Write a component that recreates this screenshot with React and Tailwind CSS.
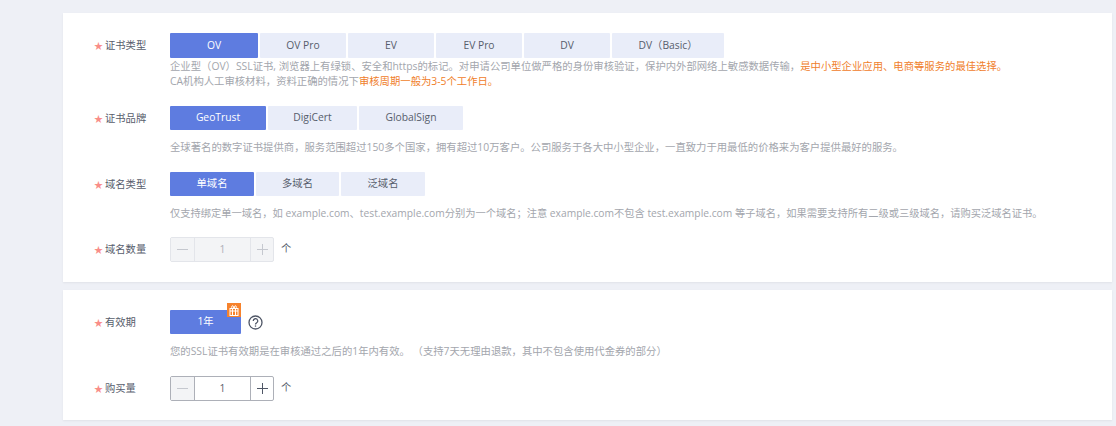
const FONT = "font-['Open_Sans','Noto_Sans_CJK_SC',sans-serif]";

function Label({ children }) {
  return (
    <div className="w-[76px] h-[25px] shrink-0 flex items-center pt-[1px] text-[10.3px] text-[#575d6c]">
      <span className="text-[#f98d88] w-[11px] text-[9px]">★</span>
      {children}
    </div>
  );
}

function Options({ items, widths, small }) {
  return (
    <div className="flex gap-[2px]">
      {items.map((item, i) => (
        <button
          key={item}
          type="button"
          className={`text-[10.3px] rounded-[1px] ${small ? 'h-[24px]' : 'h-[25px]'} ${widths[i]} ${
            i === 0 ? 'bg-[#5e7ce0] text-white' : 'bg-[#e9edf9] text-[#575d6c]'
          }`}
        >
          {item}
        </button>
      ))}
    </div>
  );
}

function Stepper({ disabled }) {
  return (
    <div className="flex items-center">
      <div
        className={`flex w-[104px] h-[25px] rounded-[2px] border text-[10.3px] ${
          disabled ? 'border-[#e3e5ea] bg-[#f3f4f6] text-[#adb0b8]' : 'border-[#adb0b8] bg-white text-[#575d6c]'
        }`}
      >
        <span className={`w-[24px] flex items-center justify-center border-r bg-[#f3f4f6] text-[#c5c8cf] ${disabled ? 'border-[#e3e5ea]' : 'border-[#adb0b8]'}`}>
          <svg width="11" height="11" viewBox="0 0 11 11"><path d="M0 5.5h11" stroke="currentColor" /></svg>
        </span>
        <span className="flex-1 flex items-center justify-center">1</span>
        <span className={`w-[23px] flex items-center justify-center border-l ${disabled ? 'border-[#e3e5ea] text-[#c5c8cf]' : 'border-[#adb0b8] text-[#4f5666]'}`}>
          <svg width="11" height="11" viewBox="0 0 11 11"><path d="M0 5.5h11M5.5 0v11" stroke="currentColor" /></svg>
        </span>
      </div>
      <span className="ml-[7px] -mt-[2px] text-[10.3px] text-[#575d6c]">个</span>
    </div>
  );
}

function GiftBadge() {
  return (
    <span className="absolute -top-[7px] right-0 w-[14px] h-[14px] bg-[#f6822c] flex items-center justify-center">
      <svg width="10" height="11" viewBox="0 0 10 11" fill="none" stroke="#fff" strokeWidth="1">
        <rect x="1" y="3.5" width="8" height="7" />
        <path d="M1 6h8M3.5 3.5v7M6.5 3.5v7" />
        <path d="M3.5 3.5C2 2.5 2.5.5 4 .8L5 3.5 6 .8c1.5-.3 2 1.7.5 2.7" />
      </svg>
    </span>
  );
}

export default function App() {
  return (
    <div className={`${FONT} w-[1116px] h-[426px] overflow-hidden bg-[#eef0f6] pt-[13px] pl-[63px] pr-[4px] flex flex-col gap-[8px]`}>
      <section className="bg-white h-[269px] pl-[31px] pt-[20px] shadow-[0_1px_2px_rgba(0,0,0,0.06)]">
        <div className="flex">
          <Label>证书类型</Label>
          <div>
            <Options
              items={['OV', 'OV Pro', 'EV', 'EV Pro', 'DV', 'DV（Basic）']}
              widths={['w-[88px]', 'w-[86px]', 'w-[86px]', 'w-[86px]', 'w-[86px]', 'w-[112px]']}
            />
            <p className="text-[10.35px] leading-[15px] mt-[1px] text-[#a3a6ad]">
              企业型（OV）SSL证书, 浏览器上有绿锁、安全和https的标记。对申请公司单位做严格的身份审核验证，保护内外部网络上敏感数据传输，
              <span className="text-[#f0802b]">是中小型企业应用、电商等服务的最佳选择。</span>
            </p>
            <p className="text-[10.35px] leading-[15px] text-[#a3a6ad]">
              CA机构人工审核材料，资料正确的情况下<span className="text-[#f0802b]">审核周期一般为3-5个工作日。</span>
            </p>
          </div>
        </div>

        <div className="flex mt-[17px]">
          <Label>证书品牌</Label>
          <div>
            <Options items={['GeoTrust', 'DigiCert', 'GlobalSign']} widths={['w-[96px]', 'w-[89px]', 'w-[104px]']} small />
            <p className="text-[10.35px] leading-[15px] mt-[10px] text-[#a3a6ad]">
              全球著名的数字证书提供商，服务范围超过150多个国家，拥有超过10万客户。公司服务于各大中小型企业，一直致力于用最低的价格来为客户提供最好的服务。
            </p>
          </div>
        </div>

        <div className="flex mt-[17px]">
          <Label>域名类型</Label>
          <div>
            <Options items={['单域名', '多域名', '泛域名']} widths={['w-[84px]', 'w-[83px]', 'w-[84px]']} small />
            <p className="text-[10.25px] leading-[15px] mt-[10px] text-[#a3a6ad]">
              仅支持绑定单一域名，如 example.com、test.example.com分别为一个域名；注意 example.com不包含 test.example.com 等子域名，如果需要支持所有二级或三级域名，请购买泛域名证书。
            </p>
          </div>
        </div>

        <div className="flex mt-[16px]">
          <Label>域名数量</Label>
          <Stepper disabled />
        </div>
      </section>

      <section className="bg-white h-[130px] pl-[31px] pt-[20px] shadow-[0_1px_2px_rgba(0,0,0,0.06)]">
        <div className="flex">
          <Label>有效期</Label>
          <div>
            <div className="flex items-center">
              <button type="button" className="relative w-[71px] h-[24px] bg-[#5e7ce0] text-white text-[10.3px] rounded-[1px]">
                1年
                <GiftBadge />
              </button>
              <svg className="ml-[7px] mt-[1px]" width="15" height="15" viewBox="0 0 15 15" fill="none" stroke="#4f5666">
                <circle cx="7.5" cy="7.5" r="6.5" strokeWidth="1.3" />
                <path d="M5.3 6a2.2 2.2 0 1 1 3.3 1.8c-.8.4-1.1.8-1.1 1.6" strokeWidth="1.3" />
                <path d="M7.5 10.4v1.3" strokeWidth="1.3" />
              </svg>
            </div>
            <p className="text-[10.35px] leading-[15px] mt-[10px] text-[#a3a6ad] whitespace-pre">
              您的SSL证书有效期是在审核通过之后的1年内有效。 （支持7天无理由退款，其中不包含使用代金券的部分）
            </p>
          </div>
        </div>
        <div className="flex mt-[17px]">
          <Label>购买量</Label>
          <Stepper />
        </div>
      </section>
    </div>
  );
}
